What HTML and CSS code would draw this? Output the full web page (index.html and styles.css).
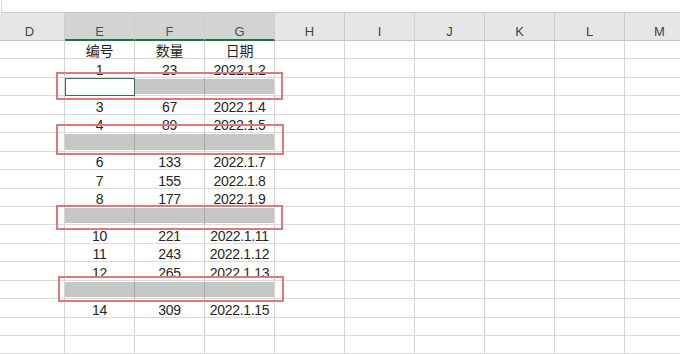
FILE: index.html
```html
<!DOCTYPE html>
<html lang="zh">
<head>
    <meta charset="UTF-8">
    <title>Sheet</title>
    <link rel="stylesheet" href="styles.css">
</head>
<body>
    <div class="formula"></div>

    <div class="sheet" id="sheet">
        <div class="row head">
            <div class="hc">D</div>
            <div class="hc on">E</div>
            <div class="hc on">F</div>
            <div class="hc on">G</div>
            <div class="hc">H</div>
            <div class="hc">I</div>
            <div class="hc">J</div>
            <div class="hc">K</div>
            <div class="hc">L</div>
            <div class="hc">M</div>
        </div>
    </div>

    <!-- red marks drawn over the sheet -->
    <div class="mark m1"></div>
    <div class="mark m2"></div>
    <div class="mark m3"></div>
    <div class="mark m4"></div>

    <script>
        const data = [
            ['编号', '数量', '日期'],
            ['1', '23', '2022.1.2'],
            'active',
            ['3', '67', '2022.1.4'],
            ['4', '89', '2022.1.5'],
            'sel',
            ['6', '133', '2022.1.7'],
            ['7', '155', '2022.1.8'],
            ['8', '177', '2022.1.9'],
            'sel',
            ['10', '221', '2022.1.11'],
            ['11', '243', '2022.1.12'],
            ['12', '265', '2022.1.13'],
            'sel',
            ['14', '309', '2022.1.15'],
            null,
            null
        ];

        const sheet = document.getElementById('sheet');
        data.forEach(function(item) {
            const row = document.createElement('div');
            row.className = 'row';
            for (let i = 0; i < 10; i++) {
                const cell = document.createElement('div');
                cell.className = 'c';
                if (i >= 1 && i <= 3) {
                    if (Array.isArray(item)) {
                        cell.textContent = item[i - 1];
                    } else if (item) {
                        cell.classList.add('sel');
                        if (i === 3) cell.classList.add('last');
                        if (i === 1 && item === 'active') cell.classList.add('active');
                    }
                }
                row.appendChild(cell);
            }
            sheet.appendChild(row);
        });
    </script>
</body>
</html>
```

FILE: styles.css
```css
html, body {
    margin: 0;
    overflow: hidden;
    background-color: #fff;
}
body {
    position: relative;
    width: 680px;
    height: 354px;
    font-family: 'Liberation Sans', 'Noto Sans CJK SC', sans-serif;
    color: #222;
}
.formula {
    height: 12px;
    margin-left: 1px;
    border-left: 1px solid #d8d8d8;
    border-bottom: 1px solid #c9c9c9;
}
.sheet {
    margin-left: -5px;
    width: 700px;
}
.row {
    display: grid;
    grid-template-columns: repeat(10, 70px);
    height: 18.44px;
}
.head {
    height: 28px;
    background-color: #e6e6e6;
}
.hc {
    box-sizing: border-box;
    display: flex;
    align-items: flex-end;
    justify-content: center;
    padding-bottom: 2px;
    border-right: 1px solid #cdcdcd;
    border-bottom: 1px solid #c4c4c4;
    font-size: 13px;
    line-height: 13px;
    color: #444;
}
.hc.on {
    background-color: #d3d3d3;
    border-bottom: 2px solid #217346;
    padding-bottom: 1px;
    color: #34604a;
}
.c {
    box-sizing: border-box;
    display: flex;
    align-items: flex-end;
    justify-content: center;
    border-right: 1px solid #d4d4d4;
    border-bottom: 1px solid #dadada;
    font-size: 14px;
    line-height: 14px;
    letter-spacing: -0.3px;
    color: #262626;
}
.c.sel {
    padding: 1px 0;
    background-color: #c6c6c6;
    background-clip: content-box;
    border-right-color: #a9a9a9;
}
.c.sel.last {
    border-right-color: #d4d4d4;
}
.c.active {
    background-color: #fff;
    outline: 1px solid #3e6b52;
    outline-offset: -1px;
}
.mark {
    position: absolute;
    box-sizing: border-box;
    border: 2px solid #dc7880;
}
.m1 {
    left: 56px;
    top: 72px;
    width: 227px;
    height: 28px;
}
.m2 {
    left: 56px;
    top: 124px;
    width: 228px;
    height: 31px;
}
.m3 {
    left: 56px;
    top: 205px;
    width: 227px;
    height: 25px;
}
.m4 {
    left: 58px;
    top: 276px;
    width: 226px;
    height: 26px;
}
```
